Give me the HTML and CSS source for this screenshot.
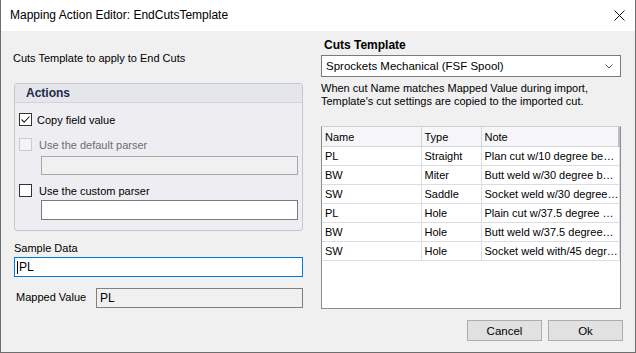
FILE: index.html
```html
<!DOCTYPE html>
<html lang="en">
<head>
    <meta charset="UTF-8">
    <title>Mapping Action Editor: EndCutsTemplate</title>
    <link rel="stylesheet" href="styles.css">
</head>
<body>
    <div class="window">
        <div class="titlebar">
            <span class="title">Mapping Action Editor: EndCutsTemplate</span>
            <svg class="close" width="11" height="11" viewBox="0 0 11 11">
                <path d="M0.5 0.5 L10.5 10.5 M10.5 0.5 L0.5 10.5" stroke="#111" stroke-width="1" fill="none"/>
            </svg>
        </div>

        <div class="content">
            <!-- left side: actions and sample -->
            <div class="left">
                <div class="intro">Cuts Template to apply to End Cuts</div>

                <div class="group">
                    <div class="group-head">Actions</div>
                    <div class="group-body">
                        <label class="check first">
                            <span class="box">
                                <svg width="11" height="11" viewBox="0 0 11 11">
                                    <path d="M1.5 5.5 L4.2 8.2 L9.5 2.5" stroke="#222" stroke-width="1.1" fill="none"/>
                                </svg>
                            </span>
                            Copy field value
                        </label>
                        <label class="check disabled">
                            <span class="box"></span>
                            <span class="check-text">Use the default parser</span>
                        </label>
                        <div class="field sub disabled"></div>
                        <label class="check custom">
                            <span class="box"></span>
                            <span class="check-text">Use the custom parser</span>
                        </label>
                        <div class="field sub tall"></div>
                    </div>
                </div>

                <div class="label">Sample Data</div>
                <div class="field focus"><span class="caret"></span>PL</div>

                <div class="mapped">
                    <span class="mapped-label">Mapped Value</span>
                    <div class="field readonly">PL</div>
                </div>
            </div>

            <!-- right side: template picker and cut list -->
            <div class="right">
                <div class="heading">Cuts Template</div>
                <div class="combo">
                    <span>Sprockets Mechanical (FSF Spool)</span>
                    <svg width="8" height="5" viewBox="0 0 8 5">
                        <path d="M0.5 0.5 L4 4 L7.5 0.5" stroke="#555" stroke-width="1" fill="none"/>
                    </svg>
                </div>
                <p class="desc">When cut Name matches Mapped Value during import,<br>Template's cut settings are copied to the imported cut.</p>

                <div class="grid">
                    <table class="cuts">
                        <colgroup>
                            <col class="col-name">
                            <col class="col-type">
                            <col>
                        </colgroup>
                        <thead>
                            <tr><th>Name</th><th>Type</th><th>Note</th></tr>
                        </thead>
                        <tbody>
                            <tr><td>PL</td><td>Straight</td><td>Plan cut w/10 degree be…</td></tr>
                            <tr><td>BW</td><td>Miter</td><td>Butt weld w/30 degree b…</td></tr>
                            <tr><td>SW</td><td>Saddle</td><td>Socket weld w/30 degree…</td></tr>
                            <tr><td>PL</td><td>Hole</td><td>Plain cut w/37.5 degree …</td></tr>
                            <tr><td>BW</td><td>Hole</td><td>Butt weld w/37.5 degree…</td></tr>
                            <tr><td>SW</td><td>Hole</td><td>Socket weld with/45 degr…</td></tr>
                        </tbody>
                    </table>
                </div>

                <div class="buttons">
                    <button class="btn">Cancel</button>
                    <button class="btn">Ok</button>
                </div>
            </div>
        </div>
    </div>
</body>
</html>
```

FILE: styles.css
```css
body {
    margin: 0;
    padding: 0;
    font-family: 'Liberation Sans', Arial, sans-serif;
    font-size: 11px;
    color: #000;
    background-color: #f0f0f0;
}

.window {
    width: 636px;
    height: 353px;
    box-sizing: border-box;
    border: 1px solid #6e6e6e;
    border-top: none;
    background-color: #f0f0f0;
    display: flex;
    flex-direction: column;
}

.titlebar {
    height: 31px;
    flex: none;
    background-color: #fff;
    display: flex;
    align-items: center;
    padding: 0 10px 0 9px;
}

.title {
    font-size: 12px;
    flex: 1;
    padding-bottom: 1px;
}

.content {
    display: flex;
    gap: 18px;
    padding-left: 13px;
}

/* left column */
.left {
    width: 289px;
    display: flex;
    flex-direction: column;
}

.intro {
    margin-top: 20px;
    line-height: 14px;
    height: 14px;
    margin-left: -1px;
}

.group {
    margin-top: 18px;
    border: 1px solid #c6c6ce;
    border-radius: 3px;
    background-color: #eeeef2;
}

.group-head {
    height: 18px;
    line-height: 18px;
    padding-left: 11px;
    font-weight: bold;
    font-size: 12px;
    color: #1c2a48;
    background-color: #e5e6eb;
    border-bottom: 1px solid #d3d4db;
    border-radius: 3px 3px 0 0;
}

.group-body {
    padding: 10px 4px 10px 4px;
    display: flex;
    flex-direction: column;
}

.check {
    display: flex;
    align-items: center;
    height: 13px;
    gap: 6px;
    margin-top: 12px;
}

.check.first {
    margin-top: 0;
    gap: 5px;
}

.check.custom {
    margin-top: 9px;
}

.check-text {
    margin-left: 1px;
}

.box {
    width: 13px;
    height: 13px;
    box-sizing: border-box;
    border: 1px solid #333;
    background-color: #fff;
    display: flex;
    align-items: center;
    justify-content: center;
}

.check.disabled {
    color: #6d6d6d;
}

.check.disabled .box {
    border-color: #cccccc;
    background-color: #f4f4f4;
}

.field {
    height: 20px;
    box-sizing: border-box;
    border: 1px solid #7a7a7a;
    background-color: #fff;
    padding-left: 2px;
    line-height: 18px;
    font-size: 12px;
    display: flex;
    align-items: center;
}

.field.sub {
    margin-left: 22px;
    width: 257px;
}

.field.disabled {
    height: 19px;
    margin-top: 5px;
    background-color: #f0f0f0;
    border-color: #a8a8a8;
}

.field.tall {
    margin-top: 3px;
}

.label {
    margin-top: 10px;
    line-height: 14px;
}

.field.focus {
    margin-top: 2px;
    border-color: #0078d7;
}

.caret {
    width: 1px;
    height: 13px;
    background-color: #000;
    margin-right: 1px;
}

.mapped {
    margin-top: 11px;
    display: flex;
    align-items: center;
}

.mapped-label {
    width: 80px;
    padding-left: 2px;
    margin-top: -3px;
}

.field.readonly {
    flex: 1;
    background-color: #f0f0f0;
    border-color: #808080;
    padding-left: 3px;
}

/* right column */
.right {
    width: 300px;
    display: flex;
    flex-direction: column;
}

.heading {
    margin-top: 7px;
    line-height: 14px;
    font-weight: bold;
    font-size: 12px;
    padding-left: 3px;
}

.combo {
    margin-top: 3px;
    height: 22px;
    box-sizing: border-box;
    border: 1px solid #7a7a7a;
    background-color: #fff;
    display: flex;
    align-items: center;
    justify-content: space-between;
    padding: 0 7px 0 4px;
    font-size: 11.5px;
}

.desc {
    margin: 5px 0 0 0;
    line-height: 13px;
}

.grid {
    margin-top: 18px;
    height: 183px;
    box-sizing: border-box;
    border: 1px solid #8c8c94;
    border-top-color: #d0d0d8;
    background-color: #fff;
}

.cuts {
    width: 100%;
    border-collapse: collapse;
    table-layout: fixed;
    font-size: 11px;
}

.col-name {
    width: 99px;
}

.col-type {
    width: 60px;
}

.cuts th {
    height: 19px;
    padding: 0 0 0 3px;
    text-align: left;
    font-weight: normal;
    background-color: #f6f6f8;
    border-right: 1px solid #d3d3dc;
    border-bottom: 1px solid #d3d3dc;
}

.cuts th:last-child {
    border-right: 2px solid #bfbfc6;
}

.cuts td {
    height: 18px;
    padding: 0 0 0 3px;
    white-space: nowrap;
    overflow: hidden;
    border-right: 1px solid #dcdce4;
    border-bottom: 1px solid #dcdce4;
}

.buttons {
    margin-top: 11px;
    display: flex;
    justify-content: flex-end;
    gap: 6px;
    margin-right: -2px;
}

.btn {
    width: 75px;
    height: 21px;
    font-family: 'Liberation Sans', Arial, sans-serif;
    font-size: 11.5px;
    background-color: #e1e1e1;
    border: 1px solid #adadad;
    padding: 0;
    color: #000;
}
```
